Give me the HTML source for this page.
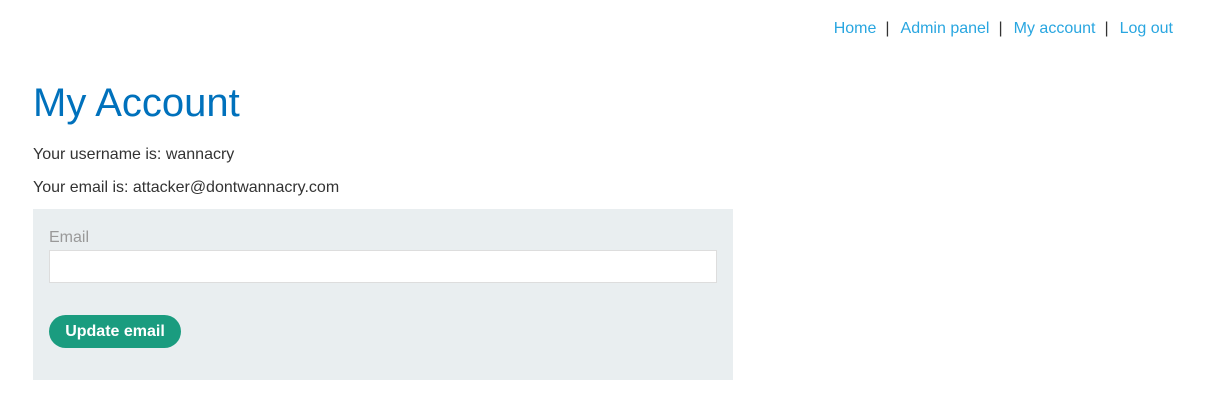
<!DOCTYPE html>
<html><head><style>
body{margin:0;width:1209px;height:402px;background:#fff;font-family:"Liberation Sans",sans-serif;color:#333;position:relative}
.nav{position:absolute;top:20px;right:36px;font-size:16px;color:#333}
.nav a{color:#29a6e0;text-decoration:none}
.nav span{margin:0 11px 0 9px}
h1{position:absolute;left:33px;top:81px;margin:0;font-weight:normal;font-size:40px;color:#0071bc}
.p1{position:absolute;left:33px;top:146px;font-size:16px}
.p2{position:absolute;left:33px;top:179px;font-size:16px}
.box{position:absolute;left:33px;top:209px;width:700px;height:171px;background:#e9eef0}
.lbl{position:absolute;left:16px;top:20px;font-size:16px;color:#999}
.inp{position:absolute;left:16px;top:41px;width:666px;height:31px;background:#fff;border:1px solid #ddd}
.btn{position:absolute;left:16px;top:106px;width:132px;height:33px;border-radius:17px;background:#1a9c7f;color:#fff;font-weight:bold;font-size:16px;text-align:center;line-height:33px}
</style></head><body>
<div class="nav"><a>Home</a><span>|</span><a>Admin panel</a><span>|</span><a>My account</a><span>|</span><a>Log out</a></div>
<h1>My Account</h1>
<div class="p1">Your username is: wannacry</div>
<div class="p2">Your email is: attacker@dontwannacry.com</div>
<div class="box"><div class="lbl">Email</div><div class="inp"></div><div class="btn">Update email</div></div>
</body></html>
